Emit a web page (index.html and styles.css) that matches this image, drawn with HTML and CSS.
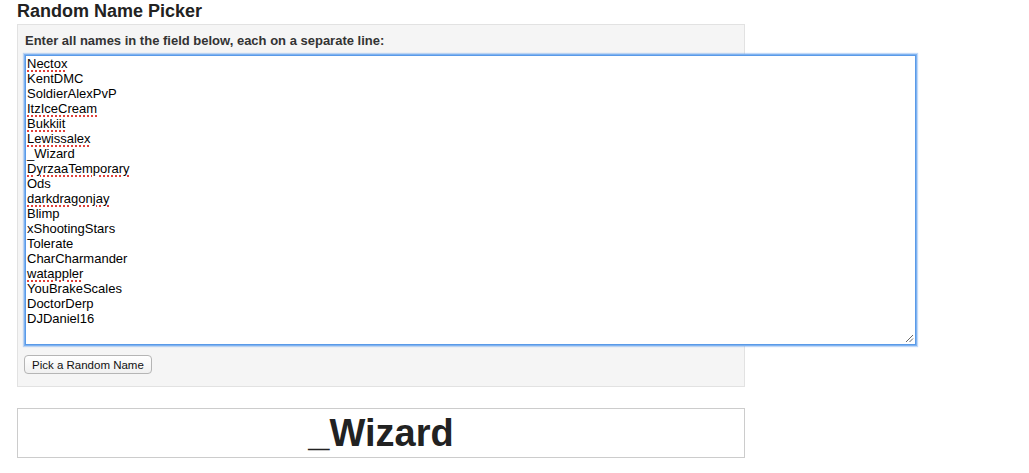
FILE: index.html
```html
<!DOCTYPE html>
<html lang="en">
<head>
<meta charset="utf-8">
<title>Random Name Picker</title>
<link rel="stylesheet" href="styles.css">
</head>
<body>
<main class="page">
  <h1 class="title">Random Name Picker</h1>
  <section class="panel">
    <label class="label" for="names">Enter all names in the field below, each on a separate line:</label>
    <div class="names" id="names" role="textbox" aria-multiline="true">
      <div class="line"><span class="typo">Nectox</span></div>
      <div class="line">KentDMC</div>
      <div class="line">SoldierAlexPvP</div>
      <div class="line"><span class="typo">ItzIceCream</span></div>
      <div class="line"><span class="typo">Bukkiit</span></div>
      <div class="line"><span class="typo">Lewissalex</span></div>
      <div class="line">_Wizard</div>
      <div class="line"><span class="typo">DyrzaaTemporary</span></div>
      <div class="line">Ods</div>
      <div class="line"><span class="typo">darkdragonjay</span></div>
      <div class="line">Blimp</div>
      <div class="line">xShootingStars</div>
      <div class="line">Tolerate</div>
      <div class="line">CharCharmander</div>
      <div class="line"><span class="typo">watappler</span></div>
      <div class="line">YouBrakeScales</div>
      <div class="line">DoctorDerp</div>
      <div class="line">DJDaniel16</div>
      <svg class="grip" width="9" height="9" viewBox="0 0 9 9" aria-hidden="true">
        <path d="M1 8 L8 1 M4.5 8 L8 4.5" stroke="#666" stroke-width="1" fill="none"/>
      </svg>
    </div>
    <button class="pick" type="button">Pick a Random Name</button>
  </section>
  <div class="result">_Wizard</div>
</main>
</body>
</html>
```

FILE: styles.css
```css
html, body {
  margin: 0;
  padding: 0;
  background: #ffffff;
}

body {
  font-family: "Liberation Sans", Arial, Helvetica, sans-serif;
  color: #222222;
}

.page {
  padding: 1px 0 0 17px;
  width: 728px;
}

.title {
  margin: 0 0 2px 0;
  font-size: 18px;
  line-height: 21px;
  font-weight: bold;
  color: #222222;
}

.panel {
  background: #f5f5f5;
  border: 1px solid #e2e2e2;
  padding: 8px 7px 12px 7px;
  display: flex;
  flex-direction: column;
  align-items: flex-start;
}

.label {
  font-size: 13px;
  line-height: 15px;
  font-weight: bold;
  color: #333333;
  margin-bottom: 7px;
}

.names {
  position: relative;
  box-sizing: border-box;
  width: 891px;
  height: 290px;
  flex: none;
  background: #ffffff;
  border: 1px solid #5a9ae8;
  box-shadow: 0 0 0 1px #7fb3f0, 0 0 1px 2px rgba(120, 170, 240, 0.45);
  padding: 0 1px;
  font-size: 13px;
  line-height: 15px;
  color: #000000;
}

.line {
  white-space: pre;
}

.typo {
  text-decoration: underline dotted #e0403a;
  text-decoration-thickness: 2px;
  text-underline-offset: 2px;
}

.grip {
  position: absolute;
  right: 1px;
  bottom: 1px;
}

.pick {
  margin-top: 10px;
  margin-left: -1px;
  font-family: "Liberation Sans", Arial, Helvetica, sans-serif;
  font-size: 11.5px;
  line-height: 14px;
  color: #111111;
  padding: 2px 7px 1px 7px;
  background: linear-gradient(#ffffff, #f0f0f0);
  border: 1px solid #b5b5b5;
  border-radius: 4px;
}

.result {
  margin-top: 21px;
  border: 1px solid #cccccc;
  background: #ffffff;
  height: 48px;
  display: flex;
  align-items: center;
  justify-content: center;
  font-size: 38px;
  line-height: 44px;
  font-weight: bold;
  color: #222222;
}
```
